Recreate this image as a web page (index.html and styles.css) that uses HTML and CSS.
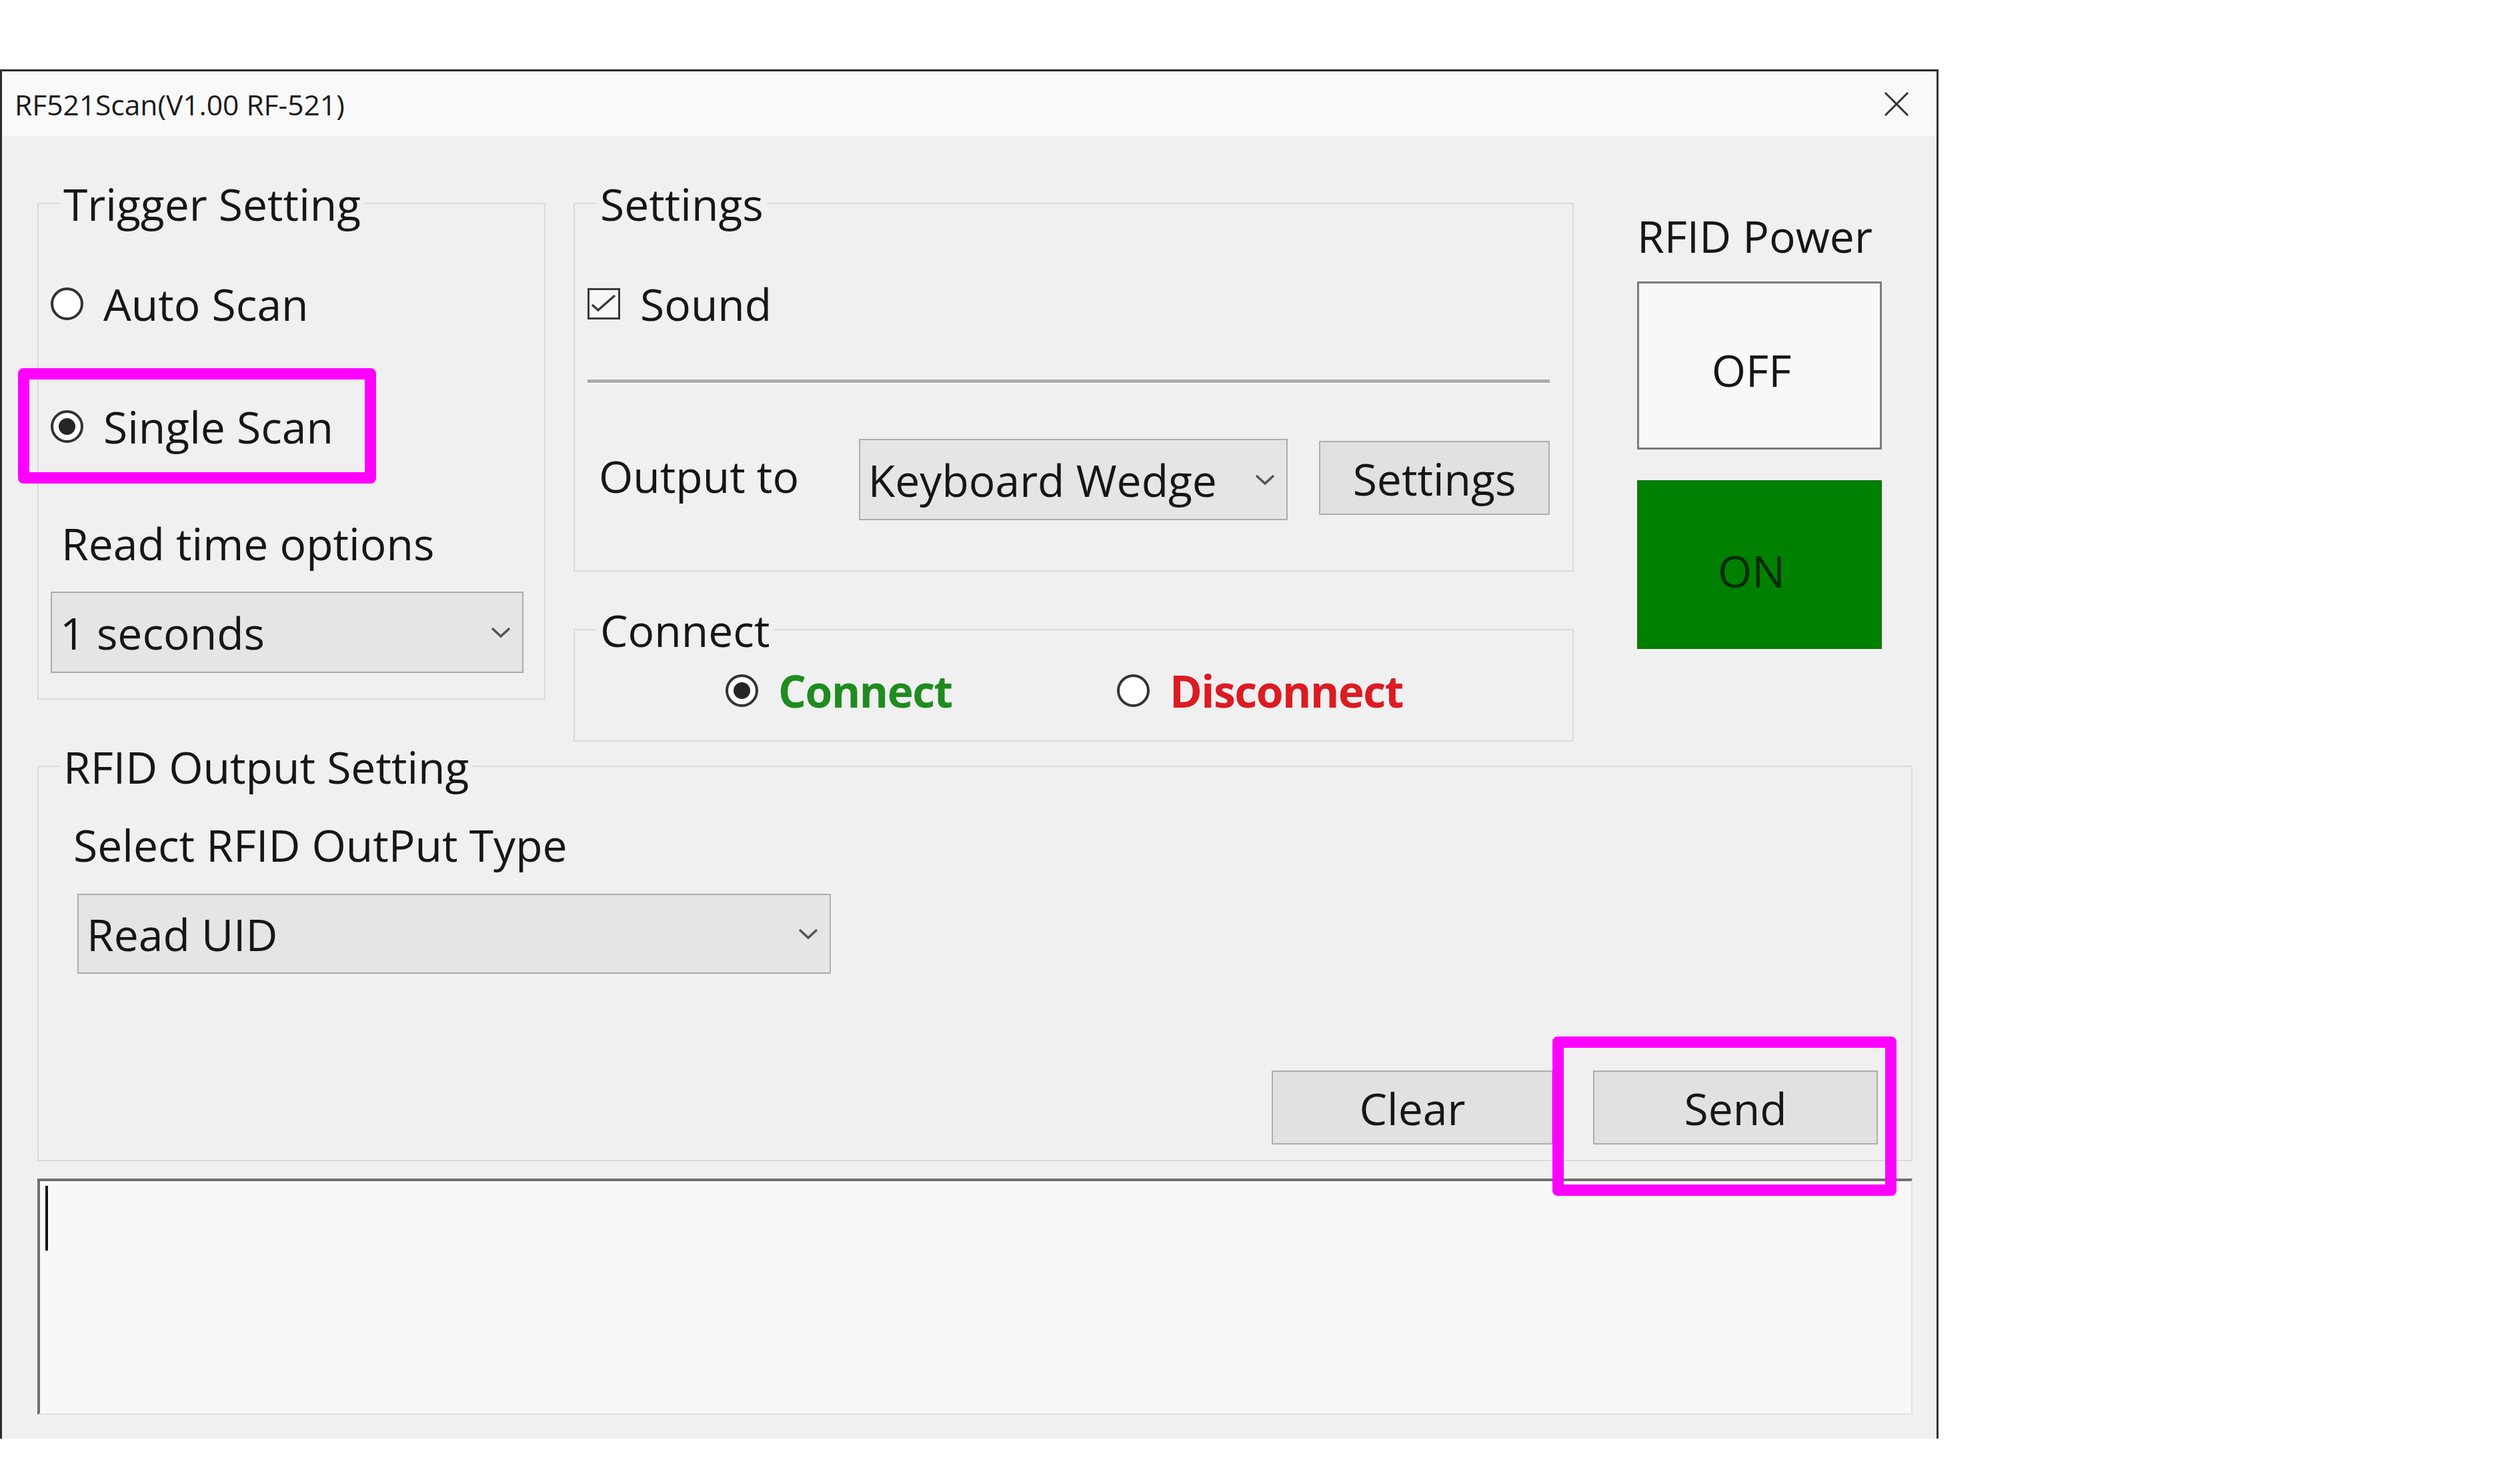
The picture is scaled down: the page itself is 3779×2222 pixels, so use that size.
FILE: index.html
```html
<!DOCTYPE html>
<html>
<head>
<meta charset="utf-8">
<title>RF521Scan</title>
<link rel="stylesheet" href="styles.css">
</head>
<body>
<div class="window">
  <div class="titlebar">
    <span class="title">RF521Scan(V1.00 RF-521)</span>
    <svg class="close" width="38" height="38" viewBox="0 0 38 38"><path d="M2 2 L36 36 M36 2 L2 36" stroke="#333" stroke-width="3" fill="none"/></svg>
  </div>
  <div class="content">
    <div class="top">
      <fieldset class="group trigger">
        <legend>Trigger Setting</legend>
        <div class="opt opt-auto"><span class="radio"></span><span>Auto Scan</span></div>
        <div class="opt opt-single"><span class="radio on"></span><span>Single Scan</span></div>
        <div class="label read-label">Read time options</div>
        <div class="combo read-combo"><span>1 seconds</span><svg class="chev" width="30" height="17" viewBox="0 0 30 17"><path d="M2 2 L15 14 L28 2" stroke="#555" stroke-width="3.5" fill="none"/></svg></div>
      </fieldset>
      <div class="middle">
        <fieldset class="group settings">
          <legend>Settings</legend>
          <div class="opt opt-sound"><span class="check"><svg width="43" height="42" viewBox="0 0 43 42"><path d="M4 22 L13 30 L38 8" stroke="#3a3a3a" stroke-width="3.5" fill="none"/></svg></span><span>Sound</span></div>
          <div class="sep"></div>
          <div class="output-row">
            <span class="label output-label">Output to</span>
            <div class="combo wedge-combo"><span>Keyboard Wedge</span><svg class="chev" width="30" height="17" viewBox="0 0 30 17"><path d="M2 2 L15 14 L28 2" stroke="#555" stroke-width="3.5" fill="none"/></svg></div>
            <div class="btn settings-btn">Settings</div>
          </div>
        </fieldset>
        <fieldset class="group connect">
          <legend>Connect</legend>
          <div class="conn-row">
            <div class="opt conn-item first"><span class="radio on"></span><span class="green">Connect</span></div>
            <div class="opt conn-item"><span class="radio"></span><span class="red">Disconnect</span></div>
          </div>
        </fieldset>
      </div>
      <div class="power">
        <div class="label power-label">RFID Power</div>
        <div class="pbtn off">OFF</div>
        <div class="pbtn on">ON</div>
      </div>
    </div>
    <fieldset class="group output">
      <legend>RFID Output Setting</legend>
      <div class="label type-label">Select RFID OutPut Type</div>
      <div class="combo uid-combo"><span>Read UID</span><svg class="chev" width="30" height="17" viewBox="0 0 30 17"><path d="M2 2 L15 14 L28 2" stroke="#555" stroke-width="3.5" fill="none"/></svg></div>
      <div class="btn-row">
        <div class="btn clear-btn">Clear</div>
        <div class="btn send-btn">Send</div>
      </div>
    </fieldset>
    <div class="textarea"><span class="caret"></span></div>
  </div>
  <div class="highlight hl-single"></div>
  <div class="highlight hl-send"></div>
</div>
</body>
</html>
```

FILE: styles.css
```css
body {
  margin: 0;
  background: #ffffff;
  font-family: "Open Sans", "Noto Sans", sans-serif;
  color: #161616;
}

.window {
  position: relative;
  margin-top: 104px;
  width: 2907px;
  box-sizing: border-box;
  background: #f0f0f0;
  border-top: 3px solid #2a2a2a;
  border-left: 3px solid #2a2a2a;
  border-right: 3px solid #333333;
}

.titlebar {
  height: 99px;
  box-sizing: border-box;
  background: #f9f9f9;
  border-bottom: 1px solid #e2e2e2;
  display: flex;
  align-items: center;
  justify-content: space-between;
  padding: 0 41px 0 19px;
}

.title {
  font-size: 42.5px;
  color: #1a1a1a;
}

.close {
  display: block;
}

.content {
  padding: 64px 36px 36px 53px;
}

.top {
  display: flex;
  align-items: flex-start;
}

.group {
  margin: 0;
  border: 2px solid #dadada;
  box-sizing: border-box;
  min-width: 0;
}

legend {
  padding: 0 6px;
  margin-left: 13px;
  font-size: 66px;
  line-height: 70px;
}

.opt {
  display: flex;
  align-items: center;
  height: 90px;
  font-size: 66px;
  line-height: 90px;
  white-space: nowrap;
}

.label {
  font-size: 66px;
  line-height: 90px;
  white-space: nowrap;
}

.radio {
  flex: none;
  width: 49px;
  height: 49px;
  box-sizing: border-box;
  border: 4px solid #333;
  border-radius: 50%;
  background: #ffffff;
  margin-right: 30px;
}

.radio.on {
  background: radial-gradient(circle, #262626 0 12px, #ffffff 13px);
}

.check {
  flex: none;
  width: 49px;
  height: 47px;
  box-sizing: border-box;
  border: 3px solid #3a3a3a;
  background: #f7f7f7;
  margin-right: 30px;
}

.check svg {
  display: block;
}

/* Trigger group */
.trigger {
  width: 762px;
  padding: 0 18px 38px 18px;
}

.opt-auto {
  margin-top: 70px;
}

.opt-single {
  margin-top: 94px;
}

.read-label {
  margin-top: 85px;
  margin-left: 16px;
}

.combo {
  display: flex;
  align-items: center;
  justify-content: space-between;
  box-sizing: border-box;
  background: #e5e5e5;
  border: 2px solid #acacac;
  font-size: 66px;
  padding: 0 17px 0 12px;
  white-space: nowrap;
}

.chev {
  display: block;
  flex: none;
}

.read-combo {
  margin-top: 28px;
  width: 709px;
  height: 122px;
}

/* Middle column */
.middle {
  width: 1500px;
  margin-left: 42px;
}

.settings {
  padding: 0 34px 75px 19px;
}

.opt-sound {
  margin-top: 70px;
}

.sep {
  margin-top: 69px;
  border-top: 5px solid #ababab;
  border-bottom: 2px solid #fbfbfb;
}

.output-row {
  margin-top: 82px;
  display: flex;
  align-items: flex-start;
}

.output-label {
  width: 408px;
  padding-left: 17px;
  box-sizing: border-box;
  margin-top: 10px;
}

.wedge-combo {
  width: 645px;
  height: 122px;
}

.btn {
  display: flex;
  align-items: center;
  justify-content: center;
  box-sizing: border-box;
  background: #e1e1e1;
  border: 2px solid #adadad;
  font-size: 66px;
  white-space: nowrap;
}

.settings-btn {
  margin-left: 47px;
  margin-top: 3px;
  width: 347px;
  height: 111px;
}

.connect {
  margin-top: 52px;
  padding: 0 34px 30px 19px;
}

.conn-row {
  margin-top: 11px;
  display: flex;
}

.conn-item.first {
  margin-left: 207px;
  width: 587px;
}

.green {
  color: #1f8c1f;
  font-weight: 700;
  letter-spacing: -1.5px;
}

.red {
  color: #dc1b22;
  font-weight: 700;
  letter-spacing: -1.5px;
}

/* Power column */
.power {
  width: 367px;
  margin-left: 95px;
}

.power-label {
  margin-top: 38px;
}

.pbtn {
  display: flex;
  align-items: center;
  justify-content: center;
  box-sizing: border-box;
  font-size: 66px;
  padding: 12px 24px 0 0;
}

.pbtn.off {
  margin-top: 24px;
  height: 252px;
  background: #f8f8f8;
  border: 3px solid #7a7a7a;
}

.pbtn.on {
  margin-top: 46px;
  height: 253px;
  background: #008000;
  border: 2px solid #0a740a;
  color: #062806;
  padding-top: 16px;
}

/* Output group */
.output {
  margin-top: 2px;
  padding: 0 50px 23px 18px;
}

.type-label {
  margin-top: 37px;
  margin-left: 34px;
}

.uid-combo {
  margin-top: 29px;
  margin-left: 40px;
  width: 1130px;
  height: 120px;
}

.btn-row {
  margin-top: 145px;
  display: flex;
  justify-content: flex-end;
  gap: 60px;
}

.clear-btn {
  width: 422px;
  height: 111px;
}

.send-btn {
  width: 427px;
  height: 111px;
}

.textarea {
  margin-top: 26px;
  height: 354px;
  box-sizing: border-box;
  background: #f8f8f8;
  border-top: 4px solid #6e6e6e;
  border-left: 4px solid #6e6e6e;
  border-right: 2px solid #e2e2e2;
  border-bottom: 2px solid #e2e2e2;
  padding: 7px 0 0 8px;
}

.caret {
  display: block;
  width: 4px;
  height: 97px;
  background: #111;
}

/* Annotation highlights */
.highlight {
  position: absolute;
  box-sizing: border-box;
  border: 17px solid #ff00ff;
  border-radius: 8px;
}

.hl-single {
  left: 24px;
  top: 445px;
  width: 537px;
  height: 173px;
}

.hl-send {
  left: 2325px;
  top: 1447px;
  width: 516px;
  height: 239px;
}
```
